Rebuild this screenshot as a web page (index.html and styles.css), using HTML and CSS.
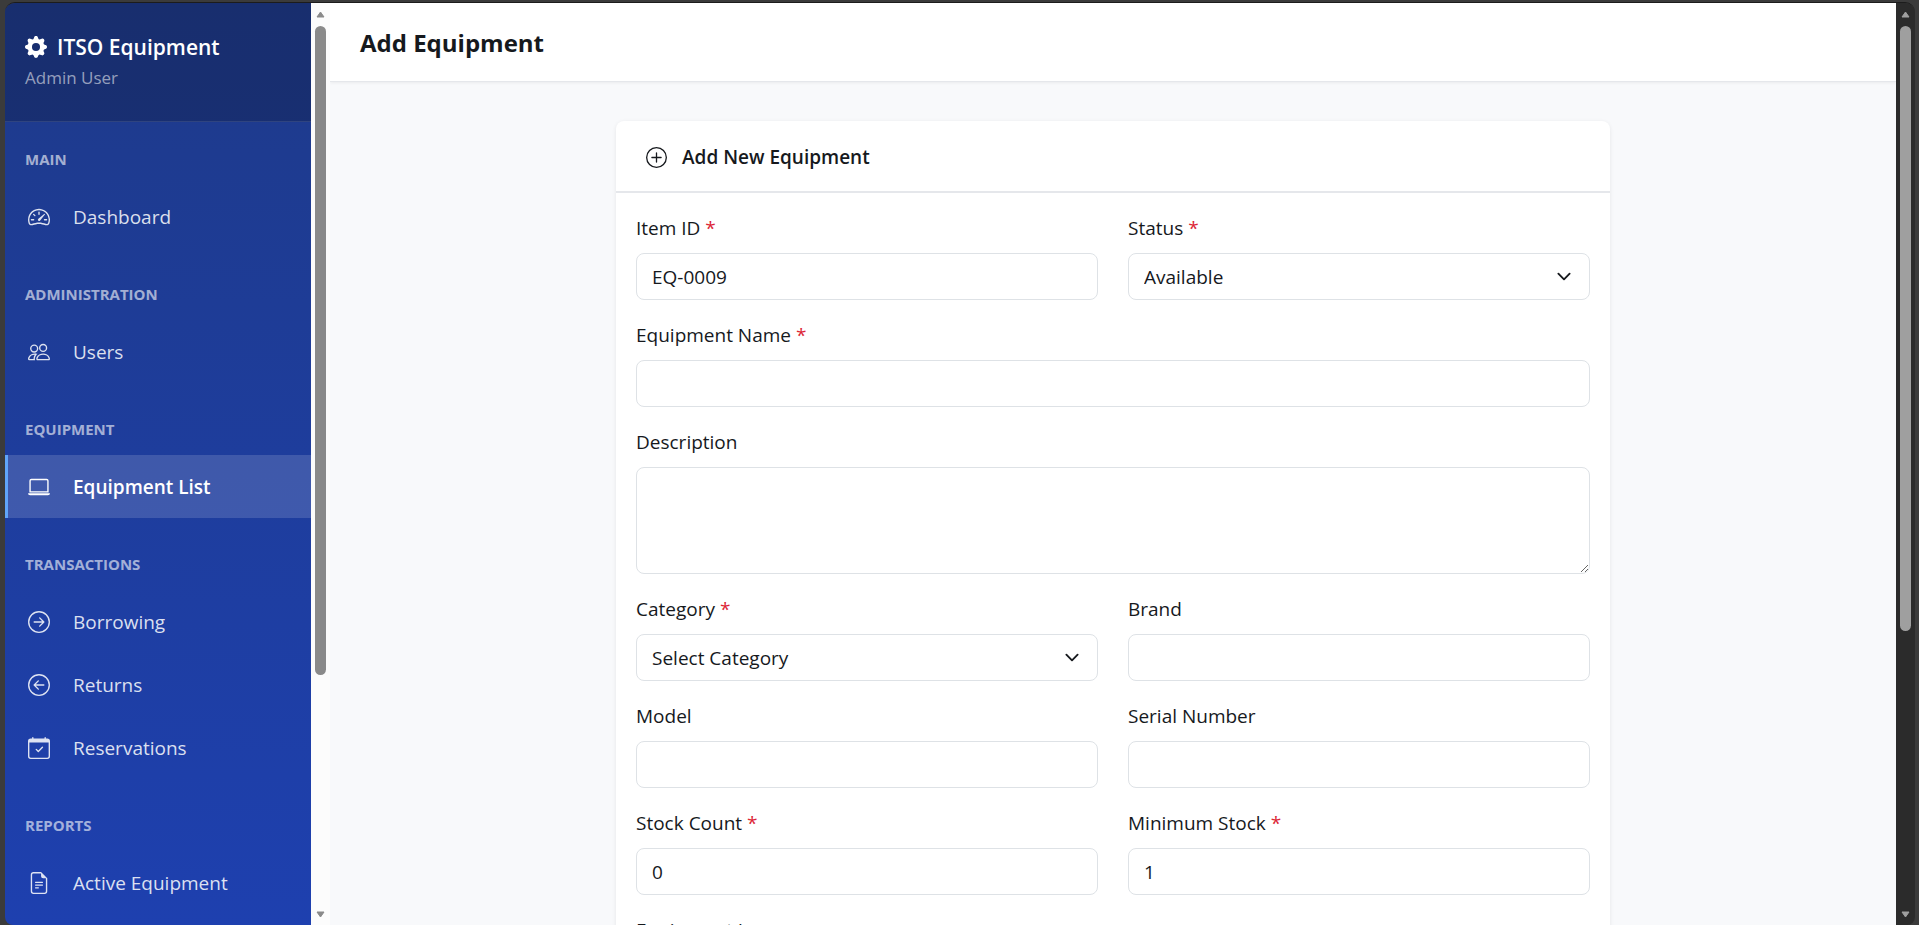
FILE: index.html
```html
<!DOCTYPE html>
<html lang="en">
<head>
    <meta charset="UTF-8">
    <meta name="viewport" content="width=device-width, initial-scale=1.0">
    <title>Add Equipment</title>
    <link rel="stylesheet" href="styles.css">
</head>
<body>
    <div class="window">
        <aside class="sidebar">
            <div class="sidebar-header">
                <div class="brand">
                    <svg class="icon" viewBox="0 0 16 16"><path d="M9.405 1.05c-.413-1.4-2.397-1.4-2.81 0l-.1.34a1.464 1.464 0 0 1-2.105.872l-.31-.17c-1.283-.698-2.686.705-1.987 1.987l.169.311c.446.82.023 1.841-.872 2.105l-.34.1c-1.4.413-1.4 2.397 0 2.81l.34.1a1.464 1.464 0 0 1 .872 2.105l-.17.31c-.698 1.283.705 2.686 1.987 1.987l.311-.169a1.464 1.464 0 0 1 2.105.872l.1.34c.413 1.4 2.397 1.4 2.81 0l.1-.34a1.464 1.464 0 0 1 2.105-.872l.31.17c1.283.698 2.686-.705 1.987-1.987l-.169-.311a1.464 1.464 0 0 1 .872-2.105l.34-.1c1.4-.413 1.4-2.397 0-2.81l-.34-.1a1.464 1.464 0 0 1-.872-2.105l.17-.31c.698-1.283-.705-2.686-1.987-1.987l-.311.169a1.464 1.464 0 0 1-2.105-.872zM8 10.93a2.929 2.929 0 1 1 0-5.86 2.929 2.929 0 0 1 0 5.858z"/></svg>
                    ITSO Equipment
                </div>
                <div class="user-name">Admin User</div>
            </div>

            <nav class="sidebar-nav">
                <div class="nav-section">
                    <div class="nav-title">MAIN</div>
                    <a class="nav-link" href="#">
                        <svg class="icon" viewBox="0 0 16 16"><path d="M8 4a.5.5 0 0 1 .5.5V6a.5.5 0 0 1-1 0V4.5A.5.5 0 0 1 8 4M3.732 5.732a.5.5 0 0 1 .707 0l.915.914a.5.5 0 1 1-.708.708l-.914-.915a.5.5 0 0 1 0-.707M2 10a.5.5 0 0 1 .5-.5h1.586a.5.5 0 0 1 0 1H2.5A.5.5 0 0 1 2 10m9.5 0a.5.5 0 0 1 .5-.5h1.5a.5.5 0 0 1 0 1H12a.5.5 0 0 1-.5-.5m.754-4.246a.39.39 0 0 0-.527-.02L7.547 9.31a.91.91 0 1 0 1.302 1.258l3.434-4.297a.39.39 0 0 0-.029-.518z"/><path fill-rule="evenodd" d="M0 10a8 8 0 1 1 15.547 2.661c-.442 1.253-1.845 1.602-2.932 1.25C11.309 13.488 9.475 13 8 13c-1.474 0-3.31.488-4.615.911-1.087.352-2.49.003-2.932-1.25A8 8 0 0 1 0 10m8-7a7 7 0 0 0-6.603 9.329c.203.575.923.876 1.68.63C4.397 12.533 6.358 12 8 12s3.604.532 4.923.96c.757.245 1.477-.056 1.68-.631A7 7 0 0 0 8 3"/></svg>
                        Dashboard
                    </a>
                </div>
                <div class="nav-section">
                    <div class="nav-title">ADMINISTRATION</div>
                    <a class="nav-link" href="#">
                        <svg class="icon" viewBox="0 0 16 16"><path d="M15 14s1 0 1-1-1-4-5-4-5 3-5 4 1 1 1 1zm-7.978-1L7 12.996c.001-.264.167-1.03.76-1.72C8.312 10.629 9.282 10 11 10c1.717 0 2.687.63 3.24 1.276.593.69.758 1.457.76 1.72l-.008.002-.014.002zM11 7a2 2 0 1 0 0-4 2 2 0 0 0 0 4m3-2a3 3 0 1 1-6 0 3 3 0 0 1 6 0M6.936 9.28a6 6 0 0 0-1.23-.247A7 7 0 0 0 5 9c-4 0-5 3-5 4q0 1 1 1h4.216A2.24 2.24 0 0 1 5 13c0-1.01.377-2.042 1.09-2.904.243-.294.526-.569.846-.816M4.92 10A5.5 5.5 0 0 0 4 13H1c0-.26.164-1.03.76-1.724.545-.636 1.492-1.256 3.16-1.275ZM1.5 5.5a3 3 0 1 1 6 0 3 3 0 0 1-6 0m3-2a2 2 0 1 0 0 4 2 2 0 0 0 0-4"/></svg>
                        Users
                    </a>
                </div>
                <div class="nav-section">
                    <div class="nav-title">EQUIPMENT</div>
                    <a class="nav-link active" href="#">
                        <svg class="icon" viewBox="0 0 16 16"><path d="M13.5 3a.5.5 0 0 1 .5.5V11H2V3.500a.5.5 0 0 1 .5-.5zm-11-1A1.500 1.500 0 0 0 1 3.500V12h14V3.500A1.500 1.500 0 0 0 13.500 2zM0 12.500h16a1.500 1.500 0 0 1-1.500 1.500h-13A1.500 1.500 0 0 1 0 12.500"/></svg>
                        Equipment List
                    </a>
                </div>
                <div class="nav-section">
                    <div class="nav-title">TRANSACTIONS</div>
                    <a class="nav-link" href="#">
                        <svg class="icon" viewBox="0 0 16 16"><path fill-rule="evenodd" d="M1 8a7 7 0 1 0 14 0A7 7 0 0 0 1 8m15 0A8 8 0 1 1 0 8a8 8 0 0 1 16 0M4.500 7.500a.5.5 0 0 0 0 1h5.793l-2.147 2.146a.5.5 0 0 0 .708.708l3-3a.5.5 0 0 0 0-.708l-3-3a.5.5 0 1 0-.708.708L10.293 7.500z"/></svg>
                        Borrowing
                    </a>
                    <a class="nav-link" href="#">
                        <svg class="icon" viewBox="0 0 16 16"><path fill-rule="evenodd" d="M1 8a7 7 0 1 0 14 0A7 7 0 0 0 1 8m15 0A8 8 0 1 1 0 8a8 8 0 0 1 16 0m-4.500-.5a.5.5 0 0 1 0 1H5.707l2.147 2.146a.5.5 0 0 1-.708.708l-3-3a.5.5 0 0 1 0-.708l3-3a.5.5 0 1 1 .708.708L5.707 7.500z"/></svg>
                        Returns
                    </a>
                    <a class="nav-link" href="#">
                        <svg class="icon" viewBox="0 0 16 16"><path d="M10.854 7.146a.5.5 0 0 1 0 .708l-3 3a.5.5 0 0 1-.708 0l-1.500-1.500a.5.5 0 1 1 .708-.708L7.500 9.793l2.646-2.647a.5.5 0 0 1 .708 0"/><path d="M3.500 0a.5.5 0 0 1 .5.5V1h8V.5a.5.5 0 0 1 1 0V1h1a2 2 0 0 1 2 2v11a2 2 0 0 1-2 2H2a2 2 0 0 1-2-2V3a2 2 0 0 1 2-2h1V.5a.5.5 0 0 1 .5-.5M1 4v10a1 1 0 0 0 1 1h12a1 1 0 0 0 1-1V4z"/></svg>
                        Reservations
                    </a>
                </div>
                <div class="nav-section">
                    <div class="nav-title">REPORTS</div>
                    <a class="nav-link" href="#">
                        <svg class="icon" viewBox="0 0 16 16"><path d="M5.500 7a.5.5 0 0 0 0 1h5a.5.5 0 0 0 0-1zM5 9.500a.5.5 0 0 1 .5-.5h5a.5.5 0 0 1 0 1h-5a.5.5 0 0 1-.5-.5m0 2a.5.5 0 0 1 .5-.5h2a.5.5 0 0 1 0 1h-2a.5.5 0 0 1-.5-.5"/><path d="M9.500 0H4a2 2 0 0 0-2 2v12a2 2 0 0 0 2 2h8a2 2 0 0 0 2-2V4.500zm0 1v2A1.500 1.500 0 0 0 11 4.500h2V14a1 1 0 0 1-1 1H4a1 1 0 0 1-1-1V2a1 1 0 0 1 1-1z"/></svg>
                        Active Equipment
                    </a>
                </div>
            </nav>
        </aside>

        <div class="scrollbar scrollbar-light">
            <svg class="arrow" viewBox="0 0 9 7"><path d="M4.500 1L8 6H1z"/></svg>
            <div class="track"><div class="thumb thumb-sidebar"></div></div>
            <svg class="arrow" viewBox="0 0 9 7"><path d="M4.500 6L8 1H1z"/></svg>
        </div>

        <main class="main">
            <header class="topbar">
                <h1 class="page-title">Add Equipment</h1>
            </header>

            <div class="content">
                <div class="card">
                    <div class="card-header">
                        <svg class="icon" viewBox="0 0 16 16"><path d="M8 15A7 7 0 1 1 8 1a7 7 0 0 1 0 14m0 1A8 8 0 1 0 8 0a8 8 0 0 0 0 16"/><path d="M8 4a.5.5 0 0 1 .5.5v3h3a.5.5 0 0 1 0 1h-3v3a.5.5 0 0 1-1 0v-3h-3a.5.5 0 0 1 0-1h3v-3A.5.5 0 0 1 8 4"/></svg>
                        <h2 class="card-title">Add New Equipment</h2>
                    </div>

                    <form class="card-body">
                        <div class="form-group">
                            <label for="item_id">Item ID <span class="required">*</span></label>
                            <input type="text" class="form-control" id="item_id" name="item_id" value="EQ-0009">
                        </div>
                        <div class="form-group">
                            <label for="status">Status <span class="required">*</span></label>
                            <div class="select-wrap">
                                <select class="form-control" id="status" name="status">
                                    <option>Available</option>
                                </select>
                                <svg class="chevron" viewBox="0 0 16 16"><path d="m2 5 6 6 6-6"/></svg>
                            </div>
                        </div>
                        <div class="form-group full">
                            <label for="name">Equipment Name <span class="required">*</span></label>
                            <input type="text" class="form-control" id="name" name="name">
                        </div>
                        <div class="form-group full">
                            <label for="description">Description</label>
                            <textarea class="form-control" id="description" name="description"></textarea>
                        </div>
                        <div class="form-group">
                            <label for="category">Category <span class="required">*</span></label>
                            <div class="select-wrap">
                                <select class="form-control" id="category" name="category">
                                    <option>Select Category</option>
                                </select>
                                <svg class="chevron" viewBox="0 0 16 16"><path d="m2 5 6 6 6-6"/></svg>
                            </div>
                        </div>
                        <div class="form-group">
                            <label for="brand">Brand</label>
                            <input type="text" class="form-control" id="brand" name="brand">
                        </div>
                        <div class="form-group">
                            <label for="model">Model</label>
                            <input type="text" class="form-control" id="model" name="model">
                        </div>
                        <div class="form-group">
                            <label for="serial">Serial Number</label>
                            <input type="text" class="form-control" id="serial" name="serial">
                        </div>
                        <div class="form-group">
                            <label for="stock">Stock Count <span class="required">*</span></label>
                            <input type="text" inputmode="numeric" class="form-control" id="stock" name="stock" value="0">
                        </div>
                        <div class="form-group">
                            <label for="min_stock">Minimum Stock <span class="required">*</span></label>
                            <input type="text" inputmode="numeric" class="form-control" id="min_stock" name="min_stock" value="1">
                        </div>
                        <div class="form-group full">
                            <label for="image">Equipment Image</label>
                            <input type="file" class="form-control" id="image" name="image">
                        </div>
                    </form>
                </div>
            </div>
        </main>

        <div class="scrollbar scrollbar-dark">
            <svg class="arrow" viewBox="0 0 9 7"><path d="M4.500 1L8 6H1z"/></svg>
            <div class="track"><div class="thumb thumb-page"></div></div>
            <svg class="arrow" viewBox="0 0 9 7"><path d="M4.500 6L8 1H1z"/></svg>
        </div>
    </div>
</body>
</html>
```
FILE: styles.css
```css
* {
    box-sizing: border-box;
}

body {
    margin: 0;
    height: 100vh;
    padding: 2px 4px 0 5px;
    overflow: hidden;
    background-color: #3b3b3b;
    font-family: 'Segoe UI', 'Open Sans', sans-serif;
    font-size: 19px;
    line-height: 30px;
    color: #16191d;
}

.window {
    display: flex;
    height: 100%;
    border-top: 1px solid #1c1c1c;
    border-radius: 10px 10px 8px 8px;
    overflow: hidden;
}

.icon {
    flex: none;
    width: 22px;
    height: 22px;
    fill: currentColor;
}

/* Sidebar */
.sidebar {
    flex: none;
    width: 306px;
    overflow: hidden;
    background: linear-gradient(180deg, #1e3a8a 0%, #1e40af 100%);
    color: white;
}

.sidebar-header {
    height: 119px;
    padding: 28px 20px 0;
    background-color: rgba(0, 0, 0, 0.2);
    border-bottom: 1px solid rgba(255, 255, 255, 0.1);
}

.brand {
    display: flex;
    align-items: center;
    gap: 10px;
    font-size: 21px;
    font-weight: 600;
    line-height: 32px;
    white-space: nowrap;
}

.user-name {
    font-size: 17px;
    color: rgba(255, 255, 255, 0.55);
}

.sidebar-nav {
    padding-top: 11px;
}

.nav-section {
    margin-bottom: 20px;
}

.nav-title {
    padding: 14px 20px;
    font-size: 15px;
    font-weight: 700;
    line-height: 24px;
    color: rgba(255, 255, 255, 0.6);
}

.nav-link {
    display: flex;
    align-items: center;
    gap: 23px;
    height: 63px;
    padding: 0 20px;
    border-left: 3px solid transparent;
    color: rgba(255, 255, 255, 0.85);
    text-decoration: none;
    white-space: nowrap;
}

.nav-link.active {
    background-color: rgba(255, 255, 255, 0.15);
    border-left-color: #60a5fa;
    color: white;
    font-weight: 600;
}

/* Scrollbars */
.scrollbar {
    flex: none;
    display: flex;
    flex-direction: column;
    align-items: center;
    gap: 8px;
    width: 19px;
    padding: 8px 0 7px;
}

.scrollbar-light {
    background-color: #fcfcfc;
    color: #8a8a8a;
}

.scrollbar-dark {
    background-color: #2b2b2b;
    color: #9f9f9f;
}

.arrow {
    width: 9px;
    height: 7px;
    fill: currentColor;
    stroke: currentColor;
    stroke-width: 1;
    stroke-linejoin: round;
}

.track {
    flex: 1;
    width: 11px;
}

.thumb {
    border-radius: 6px;
    background-color: currentColor;
}

.thumb-sidebar {
    height: 74%;
}

.thumb-page {
    height: 69%;
}

/* Main area */
.main {
    flex: 1;
    min-width: 0;
    overflow: hidden;
    background-color: #f8f9fb;
}

.topbar {
    height: 79px;
    padding: 21px 30px 0;
    background-color: white;
    border-bottom: 1px solid #e5e7eb;
    box-shadow: 0 1px 3px rgba(0, 0, 0, 0.06);
}

.page-title {
    margin: 0;
    font-size: 24px;
    font-weight: 700;
    line-height: 38px;
}

.content {
    padding: 39px 30px;
}

.card {
    max-width: 994px;
    margin: 0 auto;
    background-color: white;
    border-radius: 8px;
    box-shadow: 0 1px 4px rgba(0, 0, 0, 0.08);
}

.card-header {
    display: flex;
    align-items: center;
    gap: 15px;
    padding: 20px 30px 18px;
    border-bottom: 2px solid #e5e7eb;
}

.card-title {
    margin: 0;
    font-size: 19px;
    font-weight: 600;
    line-height: 32px;
}

.card-header .icon {
    width: 21px;
    height: 21px;
}

.card-body {
    display: grid;
    grid-template-columns: 1fr 1fr;
    gap: 20px 30px;
    padding: 20px;
}

.full {
    grid-column: 1 / -1;
}

label {
    display: block;
    margin-bottom: 10px;
}

.required {
    color: #dc2636;
}

.form-control {
    display: block;
    width: 100%;
    height: 47px;
    padding: 0 15px;
    border: 1px solid #dee2e6;
    border-radius: 8px;
    background-color: white;
    color: inherit;
    font: inherit;
    appearance: none;
}

.form-control:focus {
    outline: none;
    border-color: #60a5fa;
}

textarea.form-control {
    height: 107px;
    padding: 8px 15px;
    resize: vertical;
}

.select-wrap {
    position: relative;
}

.chevron {
    position: absolute;
    top: 16px;
    right: 16px;
    width: 20px;
    height: 15px;
    fill: none;
    stroke: #16191d;
    stroke-width: 2;
    stroke-linecap: round;
    stroke-linejoin: round;
    pointer-events: none;
}
```
